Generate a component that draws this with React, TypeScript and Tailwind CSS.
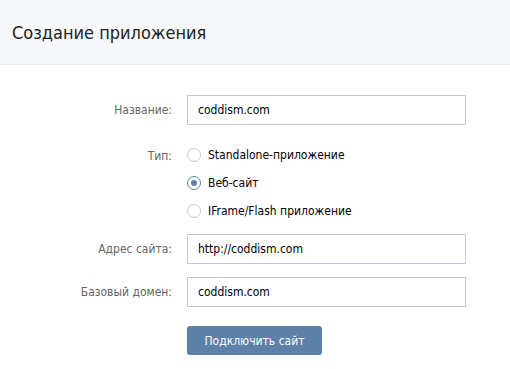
const font = { fontFamily: '"DejaVu Sans Condensed", "DejaVu Sans", Tahoma, sans-serif' }

function Row({ label, children, className = "" }: { label: string; children: React.ReactNode; className?: string }) {
  return (
    <div className={`flex items-start ${className}`}>
      <div className="w-[172px] shrink-0 text-right text-[12px] leading-[30px] text-[#656565]">{label}</div>
      <div className="flex-1">{children}</div>
    </div>
  )
}

function Field({ value }: { value: string }) {
  return (
    <div className="ml-[15px] flex h-[30px] w-[279px] items-center border border-[#c0cad5] bg-white px-[10px] text-[12px] text-black">
      {value}
    </div>
  )
}

function Radio({ label, checked }: { label: string; checked?: boolean }) {
  return (
    <div className="flex h-[28px] items-center">
      <span
        className={`mr-[7px] flex h-[14px] w-[14px] items-center justify-center rounded-full border bg-white ${
          checked ? "border-[#5e81a8]" : "border-[#c0cad5]"
        }`}
      >
        {checked && <span className="h-[6px] w-[6px] rounded-full bg-[#5e81a8]" />}
      </span>
      <span className="text-[12px] text-black">{label}</span>
    </div>
  )
}

export default function App() {
  return (
    <div className="h-[369px] w-[510px] bg-white" style={font}>
      {/* Header */}
      <div className="flex h-[65px] items-center border-b border-[#e7e8ec] bg-[#f7f8fa] px-[12px]">
        <h1 className="text-[18px] text-[#222]">Создание приложения</h1>
      </div>

      {/* Form */}
      <div className="pt-[30px]">
        <Row label="Название:">
          <Field value="coddism.com" />
        </Row>

        <Row label="Тип:" className="mt-[16px]">
          <div className="ml-[15px]">
            <Radio label="Standalone-приложение" />
            <Radio label="Веб-сайт" checked />
            <Radio label="IFrame/Flash приложение" />
          </div>
        </Row>

        <Row label="Адрес сайта:" className="mt-[9px]">
          <Field value="http://coddism.com" />
        </Row>

        <Row label="Базовый домен:" className="mt-[13px]">
          <Field value="coddism.com" />
        </Row>

        <div className="mt-[19px] pl-[187px]">
          <button className="h-[29px] w-[135px] rounded-[3px] bg-[#5e81a8] text-[12px] text-white">
            Подключить сайт
          </button>
        </div>
      </div>
    </div>
  )
}
